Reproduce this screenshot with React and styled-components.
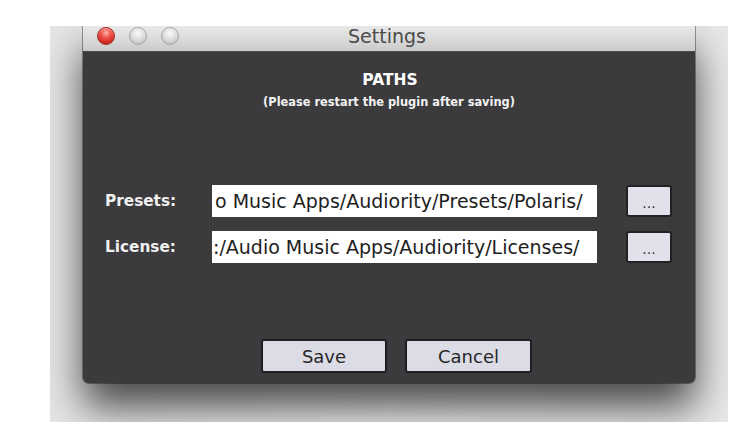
import React from "react";
import styled, { createGlobalStyle } from "styled-components";

const Global = createGlobalStyle`
  html, body { margin: 0; padding: 0; background: #ffffff; }
  body { font-family: "DejaVu Sans", "Liberation Sans", sans-serif; }
  * { box-sizing: border-box; }
`;

const Shot = styled.div`
  margin: 26px 0 0 50px;
  width: 678px;
  height: 396px;
  overflow: hidden;
  background: linear-gradient(90deg, #e6e6e6 0%, #efefef 50%, #e8e8e8 100%);
  padding-left: 33px;
`;

const Window = styled.div`
  width: 612px;
  height: 357px;
  display: flex;
  flex-direction: column;
  border-radius: 0 0 6px 6px;
  background: #3b3b3d;
  box-shadow: 0 24px 40px rgba(0, 0, 0, 0.7), 0 0 0 1px rgba(0, 0, 0, 0.35);
  overflow: hidden;
`;

const TitleBar = styled.div`
  height: 26px;
  flex: none;
  display: grid;
  grid-template-columns: 1fr auto 1fr;
  align-items: center;
  padding: 0 0 5px 14px;
  background: linear-gradient(180deg, #e8e8e8 0%, #d8d8d8 60%, #cacaca 100%);
  border-bottom: 1px solid #4a4a4a;
`;

const Lights = styled.div`
  display: flex;
  gap: 14px;
`;

const Light = styled.span`
  width: 18px;
  height: 18px;
  border-radius: 50%;
  border: 1px solid ${(p) => (p.$red ? "#a12a24" : "#a4a4a4")};
  background: ${(p) =>
    p.$red
      ? "radial-gradient(circle at 50% 30%, #ffb3ad 0%, #f0564d 35%, #d32b22 70%, #9c1a14 100%)"
      : "radial-gradient(circle at 50% 35%, #fbfbfb 0%, #dedede 45%, #c4c4c4 80%, #b0b0b0 100%)"};
  box-shadow: inset 0 1px 1px rgba(255, 255, 255, 0.5);
`;

const Title = styled.div`
  font-size: 19px;
  color: #4b4b4b;
  line-height: 20px;
  margin-right: 18px;
`;

const Body = styled.div`
  flex: 1;
  display: flex;
  flex-direction: column;
  align-items: center;
  padding: 19px 0 10px;
`;

const Heading = styled.div`
  font-weight: bold;
  font-size: 15.5px;
  line-height: 18px;
  color: #ffffff;
  margin-left: 2px;
`;

const Note = styled.div`
  font-weight: bold;
  font-size: 11.4px;
  line-height: 14px;
  color: #f2f2f2;
  margin-top: 6px;
`;

const Rows = styled.div`
  align-self: stretch;
  display: flex;
  flex-direction: column;
  gap: 14px;
  margin-top: 76px;
  padding-left: 22px;
`;

const Row = styled.div`
  display: flex;
  align-items: center;
  height: 32px;
`;

const Label = styled.div`
  width: 107px;
  font-weight: bold;
  font-size: 15.3px;
  color: #f0f0f0;
`;

const Field = styled.div`
  width: 385px;
  height: 32px;
  background: #ffffff;
  overflow: hidden;
  display: flex;
  align-items: center;
  padding-left: ${(p) => p.$pad}px;
  font-size: 19px;
  color: #1e1e1e;
  white-space: nowrap;
`;

const Browse = styled.button`
  margin-left: 29px;
  width: 46px;
  height: 32px;
  border: 2px solid #222224;
  border-radius: 3px;
  background: #e1e1eb;
  font-family: "DejaVu Sans", sans-serif;
  font-size: 14px;
  color: #333;
  padding: 4px 0 0;
  display: flex;
  align-items: center;
  justify-content: center;
`;

const Actions = styled.div`
  display: flex;
  gap: 18px;
  margin-top: 76px;
  padding-left: 15px;
`;

const Action = styled.button`
  width: ${(p) => p.$w}px;
  height: 34px;
  border: 2px solid #1f1f21;
  border-radius: 3px;
  background: #dcdce7;
  font-family: "DejaVu Sans", sans-serif;
  font-size: 18px;
  color: #262626;
  padding: 0;
`;

export default function App() {
  return (
    <>
      <Global />
      <Shot>
        <Window>
          <TitleBar>
            <Lights>
              <Light $red />
              <Light />
              <Light />
            </Lights>
            <Title>Settings</Title>
            <div />
          </TitleBar>
          <Body>
            <Heading>PATHS</Heading>
            <Note>(Please restart the plugin after saving)</Note>
            <Rows>
              <Row>
                <Label>Presets:</Label>
                <Field $pad={3}>o Music Apps/Audiority/Presets/Polaris/</Field>
                <Browse>...</Browse>
              </Row>
              <Row>
                <Label>License:</Label>
                <Field $pad={1}>:/Audio Music Apps/Audiority/Licenses/</Field>
                <Browse>...</Browse>
              </Row>
            </Rows>
            <Actions>
              <Action $w={126}>Save</Action>
              <Action $w={127}>Cancel</Action>
            </Actions>
          </Body>
        </Window>
      </Shot>
    </>
  );
}
